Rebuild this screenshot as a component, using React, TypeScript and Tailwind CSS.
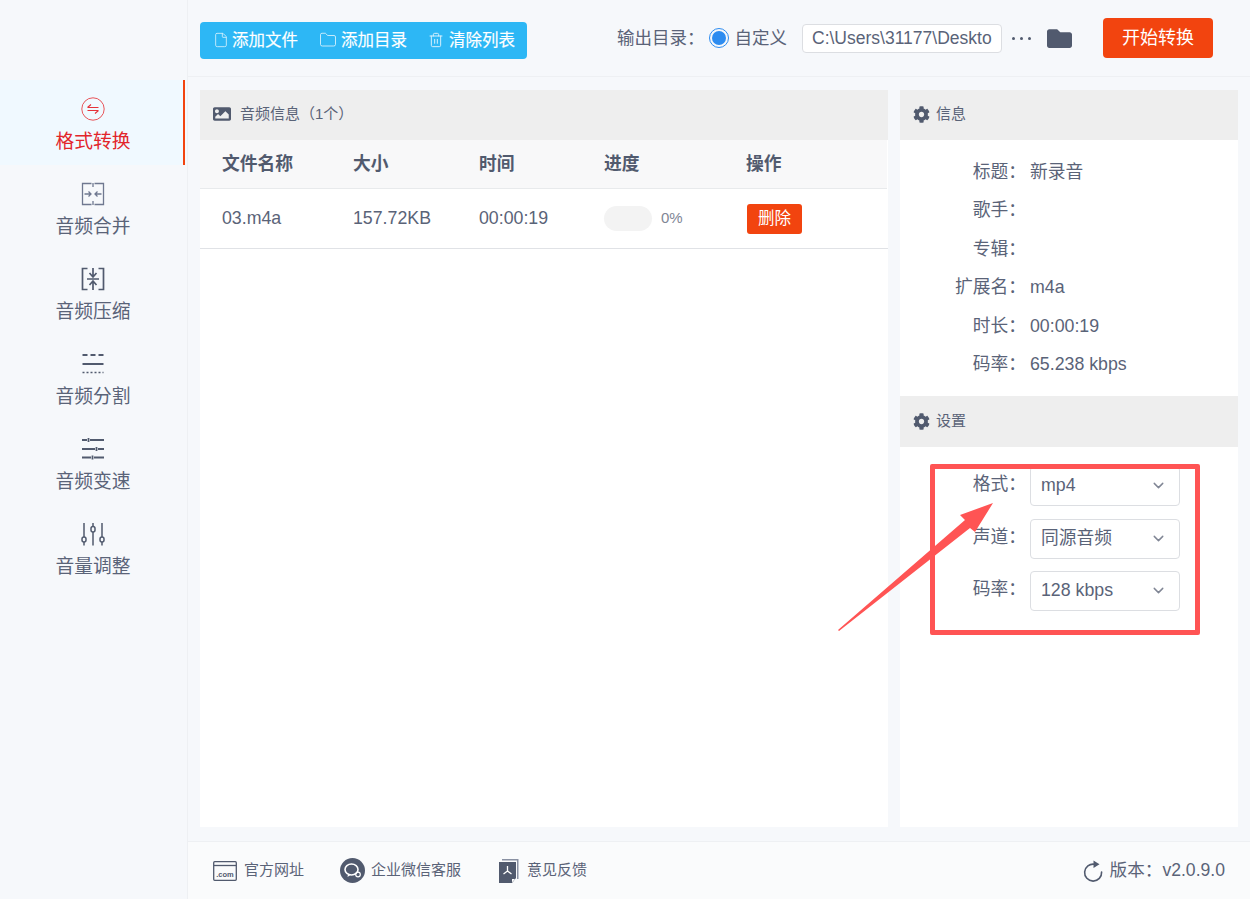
import { File, Folder, Trash2, ChevronDown } from "lucide-react";
import { FaCog, FaImage, FaFolder } from "react-icons/fa";

const SLATE = "#515a6e";

function FormatIcon() {
  return (
    <svg width="24" height="24" viewBox="0 0 24 24" fill="none" stroke="#e8555a" strokeWidth="1">
      <circle cx="12" cy="12" r="11.2" />
      <path d="M6.500 10.500h11M6.500 10.500l3.500-3M17.500 13.500h-11M17.500 13.500l-3.500 3" stroke="#e5323a" strokeWidth="1.100" />
    </svg>
  );
}

function MergeIcon() {
  return (
    <svg width="24" height="24" viewBox="0 0 24 24" fill="none" stroke="#6f7890" strokeWidth="1.300">
      <path d="M10.500 1.500h-9v21h9M13.500 1.500h9v21h-9M12 1v4M12 19v4" />
      <path d="M3.500 12h6.500M7.500 9.500L10 12l-2.500 2.500M20.500 12H14M16.500 9.500L14 12l2.500 2.500" />
    </svg>
  );
}

function CompressIcon() {
  return (
    <svg width="24" height="24" viewBox="0 0 24 24" fill="none" stroke={SLATE} strokeWidth="1.700">
      <path d="M6.500 1.500h-5v21h5M17.500 1.500h5v21h-5" />
      <path d="M12 1v8M8.500 6L12 10l3.500-4M6 12h12M12 23v-8M8.500 18L12 14l3.500 4" />
    </svg>
  );
}

function SplitIcon() {
  return (
    <svg width="24" height="24" viewBox="0 0 24 24" fill="none" stroke={SLATE}>
      <path d="M1.500 3h5M9.500 3h5M17.500 3h5" strokeWidth="1.800" />
      <path d="M1.500 12h21" strokeWidth="2" />
      <path d="M1.500 20.500h21" strokeWidth="1.600" strokeDasharray="2 2" />
    </svg>
  );
}

function SpeedIcon() {
  return (
    <svg width="24" height="24" viewBox="0 0 24 24" fill="none" stroke={SLATE} strokeWidth="1.800">
      <path d="M1 3h5M9 3h14M7.500 1v4M1 12h13M17 12h6M15.500 10v4M1 20.500h9M13 20.500h10M11.500 18.500v4" />
    </svg>
  );
}

function VolumeIcon() {
  return (
    <svg width="24" height="24" viewBox="0 0 24 24" fill="none" stroke={SLATE} strokeWidth="1.500">
      <path d="M3 1v14M3 20v3.500M12 1v3.500M12 10v13.500M21 1v14M21 20v3.500" />
      <rect x="1" y="15" width="4" height="5" rx="2" />
      <rect x="10" y="4.500" width="4" height="5.500" rx="2" />
      <rect x="19" y="15" width="4" height="5" rx="2" />
    </svg>
  );
}

function ComIcon() {
  return (
    <svg width="24" height="20" viewBox="0 0 24 20" fill="none">
      <rect x="0.700" y="0.700" width="22.600" height="18.600" rx="1" stroke={SLATE} strokeWidth="1.300" />
      <path d="M1 4.500h22" stroke={SLATE} strokeWidth="1.300" />
      <text x="12" y="15.500" textAnchor="middle" fontSize="7.500" fontWeight="700" fill={SLATE} fontFamily="Liberation Sans">.com</text>
    </svg>
  );
}

function WechatIcon() {
  return (
    <svg width="25" height="25" viewBox="0 0 25 25">
      <circle cx="12.500" cy="12.500" r="12.500" fill={SLATE} />
      <ellipse cx="11.500" cy="11.500" rx="6.500" ry="5.500" fill="none" stroke="#fff" strokeWidth="1.600" />
      <path d="M8 16l-.5 3 3-2z" fill="#fff" />
      <circle cx="18" cy="16.500" r="2.300" fill="none" stroke="#fff" strokeWidth="1.200" />
    </svg>
  );
}

function PdfIcon() {
  return (
    <svg width="20" height="24" viewBox="0 0 20 24">
      <path d="M3 0h16.500v20H18V1.500H3z" fill="#8a91a3" />
      <path d="M0 3h17v16l-4 5H0z" fill={SLATE} />
      <path d="M8.500 7v5M8.500 12l-4 3M8.500 12l4 3" stroke="#fff" strokeWidth="1.300" fill="none" />
      <path d="M13 20h3l-3 3.500z" fill="#fff" />
    </svg>
  );
}

function RefreshIcon() {
  return (
    <svg width="20" height="22" viewBox="0 0 20 22" fill="none">
      <path d="M11.500 4.200A8.500 8.500 0 1 0 18.600 12" stroke={SLATE} strokeWidth="1.600" strokeLinecap="round" />
      <path d="M10.500 0.500l6 3.700-6 3.700z" fill={SLATE} />
    </svg>
  );
}

const navItems = [
  { label: "格式转换", icon: <FormatIcon />, active: true },
  { label: "音频合并", icon: <MergeIcon /> },
  { label: "音频压缩", icon: <CompressIcon /> },
  { label: "音频分割", icon: <SplitIcon /> },
  { label: "音频变速", icon: <SpeedIcon /> },
  { label: "音量调整", icon: <VolumeIcon /> },
];

const infoRows = [
  ["标题：", "新录音"],
  ["歌手：", ""],
  ["专辑：", ""],
  ["扩展名：", "m4a"],
  ["时长：", "00:00:19"],
  ["码率：", "65.238 kbps"],
];

const settingRows = [
  ["格式：", "mp4"],
  ["声道：", "同源音频"],
  ["码率：", "128 kbps"],
];

export default function App() {
  return (
    <div className="relative flex h-screen w-full overflow-hidden bg-[#f6f8fb] text-[#5a6378] font-['Liberation_Sans','Noto_Sans_CJK_SC',sans-serif]">
      {/* Sidebar */}
      <aside className="w-[188px] shrink-0 border-r border-[#eef0f3] pt-[80px]">
        {navItems.map((item) => (
          <div
            key={item.label}
            className={
              item.active
                ? "mr-[2px] flex h-[85px] flex-col items-center border-r-2 border-[#f2440f] bg-[#f0f9ff] pt-[17px] pl-[3px] text-[#e2252b]"
                : "flex h-[85px] flex-col items-center pt-[17px] pr-[1px]"
            }
          >
            {item.icon}
            <span className="mt-[2px] text-[18.750px] leading-[38px]">{item.label}</span>
          </div>
        ))}
      </aside>

      <div className="flex min-w-0 flex-1 flex-col">
        {/* Toolbar */}
        <header className="flex h-[77px] shrink-0 items-center border-b border-[#eef0f3] pl-[12px]">
          <div className="mt-[4px] flex h-[37px] w-[327px] items-center rounded-[4px] bg-[#2db7f5] pl-[13px] text-[16.500px] text-white [-webkit-text-stroke:0.15px_white]">
            <File size={16} strokeWidth={1.300} className="opacity-80" />
            <span className="ml-[3px]">添加文件</span>
            <Folder size={18} strokeWidth={1.200} className="ml-[21px] opacity-80" />
            <span className="ml-[4px]">添加目录</span>
            <Trash2 size={16} strokeWidth={1.500} className="ml-[21px] opacity-80" />
            <span className="ml-[5px]">清除列表</span>
          </div>
          <span className="ml-[90px] text-[17.500px]">输出目录：</span>
          <span className="ml-[4px] flex h-[20px] w-[20px] items-center justify-center rounded-full border border-[#2d8cf0]">
            <span className="h-[14px] w-[14px] rounded-full bg-[#2d8cf0]" />
          </span>
          <span className="ml-[6px] text-[17.500px]">自定义</span>
          <div className="ml-[15px] flex h-[29px] w-[200px] items-center overflow-hidden rounded-[4px] border border-[#dcdee2] bg-white pl-[9px] text-[17.500px] whitespace-nowrap">
            C:\Users\31177\Deskto
          </div>
          <div className="ml-[10px] flex w-[19px] justify-between">
            <span className="h-[3px] w-[3px] rounded-full bg-[#515a6e]" />
            <span className="h-[3px] w-[3px] rounded-full bg-[#515a6e]" />
            <span className="h-[3px] w-[3px] rounded-full bg-[#515a6e]" />
          </div>
          <FaFolder size={25} className="ml-[16px] text-[#515a6e]" />
          <button className="ml-[31px] h-[40px] w-[110px] rounded-[4px] bg-[#f2440f] text-[18px] text-white">
            开始转换
          </button>
        </header>

        {/* Panels */}
        <main className="flex min-h-0 flex-1 gap-[12px] pt-[13px] pr-[12px] pb-[14px] pl-[12px]">
          <section className="w-[688px] bg-white">
            <div className="flex h-[50px] items-center bg-[#eeeeee] pb-[2px] pl-[13px] text-[15px]">
              <FaImage size={18} className="text-[#515a6e]" />
              <span className="ml-[9px]">音频信息（1个）</span>
            </div>
            <div className="mr-[1px] grid h-[49px] grid-cols-[153px_126px_125px_142px_1fr] items-center border-b border-[#e8eaec] bg-[#f8f8f9] text-[17.750px] font-bold text-[#515a6e]">
              <span className="pl-[22px]">文件名称</span>
              <span>大小</span>
              <span>时间</span>
              <span>进度</span>
              <span>操作</span>
            </div>
            <div className="grid h-[60px] grid-cols-[153px_126px_125px_142px_1fr] items-center border-b border-[#e0e2e6] text-[17.750px]">
              <span className="pl-[22px]">03.m4a</span>
              <span>157.72KB</span>
              <span>00:00:19</span>
              <span className="flex items-center">
                <span className="h-[25px] w-[48px] rounded-full bg-[#f3f3f3]" />
                <span className="ml-[9px] text-[15px] text-[#808695]">0%</span>
              </span>
              <span className="ml-[1px] flex h-[30px] w-[55px] items-center justify-center rounded-[3px] bg-[#f2440f] text-[16.500px] text-white">
                删除
              </span>
            </div>
          </section>

          <section className="flex-1 bg-white">
            <div className="flex h-[50px] items-center bg-[#eeeeee] pb-[2px] pl-[13px] text-[15px]">
              <FaCog size={17} className="text-[#515a6e]" />
              <span className="ml-[6px]">信息</span>
            </div>
            <div className="h-[256px] pt-[13px] text-[17.750px] leading-[38.400px]">
              {infoRows.map(([label, value]) => (
                <div key={label} className="flex">
                  <span className="w-[126px] text-right">{label}</span>
                  <span className="ml-[4px]">{value}</span>
                </div>
              ))}
            </div>
            <div className="flex h-[51px] items-center bg-[#eeeeee] pb-[1px] pl-[13px] text-[15px]">
              <FaCog size={17} className="text-[#515a6e]" />
              <span className="ml-[6px]">设置</span>
            </div>
            <div className="flex flex-col gap-[12.500px] pt-[19px] text-[17.750px]">
              {settingRows.map(([label, value]) => (
                <div key={label} className="flex items-center">
                  <span className="mb-[3px] w-[126px] text-right">{label}</span>
                  <div className="ml-[4px] flex h-[40px] w-[150px] items-center justify-between rounded-[4px] border border-[#dcdee2] pr-[12px] pb-[1px] pl-[10px]">
                    {value}
                    <ChevronDown size={17} className="text-[#808695]" />
                  </div>
                </div>
              ))}
            </div>
          </section>
        </main>

        {/* Footer */}
        <footer className="flex h-[58px] shrink-0 items-center border-t border-[#eef0f3] bg-[#fafbfc] pr-[25px] pl-[25px] text-[15px]">
          <ComIcon />
          <span className="ml-[7px]">官方网址</span>
          <span className="ml-[36px]">
            <WechatIcon />
          </span>
          <span className="ml-[6px]">企业微信客服</span>
          <span className="ml-[38px]">
            <PdfIcon />
          </span>
          <span className="ml-[8px]">意见反馈</span>
          <span className="ml-auto">
            <RefreshIcon />
          </span>
          <span className="ml-[7px] text-[17.600px]">版本：v2.0.9.0</span>
        </footer>
      </div>

      {/* Red annotation drawn over the screenshot */}
      <div className="pointer-events-none absolute top-[464px] left-[930px] h-[171px] w-[270px] rounded-[2px] border-[5px] border-[#ff5454]" />
      <svg className="pointer-events-none absolute top-0 left-0" width="1250" height="899">
        <polygon points="838,630 965,520 960,515 993,503 975,532 970,528 839,631" fill="#ff5454" />
      </svg>
    </div>
  );
}
